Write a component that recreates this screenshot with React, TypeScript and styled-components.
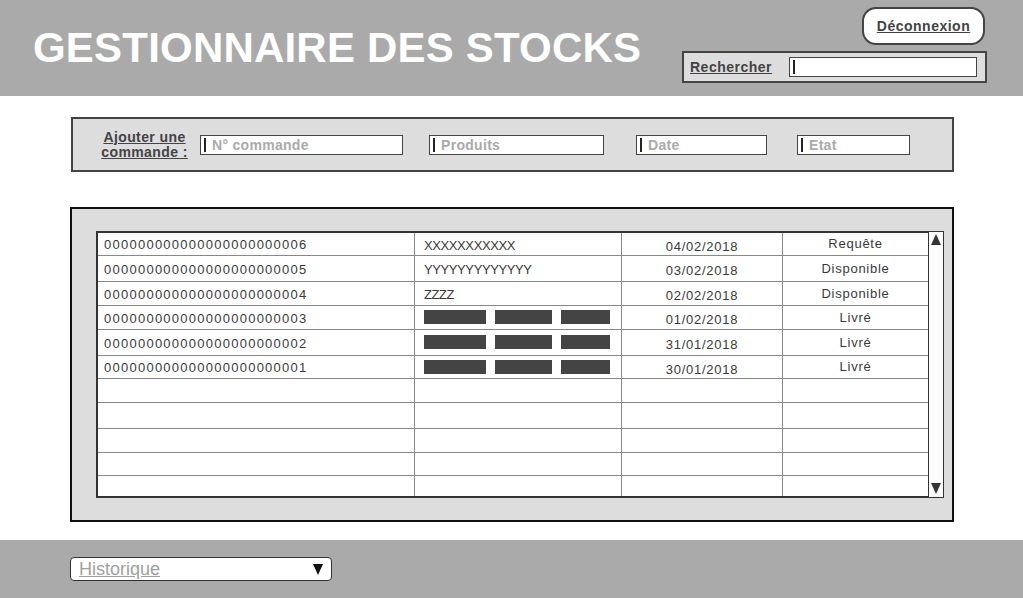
import React from "react";
import styled, { createGlobalStyle } from "styled-components";

const GlobalStyle = createGlobalStyle`
  html, body { margin: 0; padding: 0; }
  body { font-family: "Liberation Sans", Arial, sans-serif; background: #ffffff; }
  * { box-sizing: border-box; }
`;

const Page = styled.div`
  width: 1023px;
  height: 598px;
  display: flex;
  flex-direction: column;
  overflow: hidden;
`;

const Header = styled.header`
  height: 96px;
  background: #aaaaaa;
  display: flex;
  justify-content: space-between;
  align-items: center;
  padding: 0 36px 0 33px;
`;

const Title = styled.h1`
  margin: 0;
  font-family: "Liberation Sans", Arial, sans-serif;
  font-weight: 700;
  font-size: 42px;
  color: #ffffff;
  letter-spacing: 0.2px;
`;

const HeaderRight = styled.div`
  align-self: flex-start;
  padding-top: 7px;
  display: flex;
  flex-direction: column;
  align-items: flex-end;
  gap: 6px;
`;

const LogoutButton = styled.button`
  width: 123px;
  height: 38px;
  margin-right: 2px;
  border: 2px solid #444444;
  border-radius: 14px;
  background: #ffffff;
  font-family: "Liberation Sans", Arial, sans-serif;
  font-weight: 700;
  font-size: 14px;
  letter-spacing: 0.5px;
  color: #444444;
  text-decoration: underline;
  padding: 0;
  cursor: pointer;
`;

const SearchBox = styled.div`
  width: 305px;
  height: 32px;
  border: 2px solid #444444;
  background: #dddddd;
  display: flex;
  align-items: center;
  justify-content: space-between;
  padding: 0 8px 0 6px;
`;

const BoldLabel = styled.span`
  font-weight: 700;
  font-size: 14px;
  letter-spacing: 0.5px;
  color: #444444;
  text-decoration: underline;
  line-height: 15px;
  white-space: nowrap;
`;

const TextField = styled.div<{ $w: number; $ml?: number }>`
  width: ${(p) => p.$w}px;
  margin-left: ${(p) => p.$ml ?? 0}px;
  flex-shrink: 0;
  height: 20px;
  background: #ffffff;
  border: 1px solid #444444;
  display: flex;
  align-items: center;
  padding-left: 3px;
  gap: 6px;
`;

const Caret = styled.span`
  width: 2px;
  height: 14px;
  background: #222222;
  flex-shrink: 0;
`;

const Placeholder = styled.span`
  font-weight: 700;
  font-size: 14px;
  letter-spacing: 0.3px;
  color: #aaaaaa;
  white-space: nowrap;
`;

const Main = styled.main`
  flex: 1;
  background: #ffffff;
  padding: 21px 69px 0 70px;
  display: flex;
  flex-direction: column;
`;

const AddPanel = styled.section`
  margin-left: 1px;
  height: 55px;
  border: 2px solid #444444;
  background: #dddddd;
  display: flex;
  align-items: center;
  padding-left: 27px;
`;

const AddLabel = styled(BoldLabel)`
  width: 89px;
  text-align: center;
  letter-spacing: 0.4px;
  margin-right: 11px;
`;

const TablePanel = styled.section`
  margin-top: 35px;
  height: 315px;
  border: 2px solid #111111;
  background: #dddddd;
  padding: 22px 8px 22px 24px;
  display: flex;
`;

const TableBody = styled.div`
  flex: 1;
  background: #ffffff;
  border-top: 2px solid #333333;
  border-left: 2px solid #333333;
  border-bottom: 2px solid #333333;
  display: flex;
  flex-direction: column;
`;

const Row = styled.div<{ $h: number; $last?: boolean }>`
  height: ${(p) => p.$h}px;
  display: grid;
  grid-template-columns: 317px 207px 161px 1fr;
  border-bottom: ${(p) => (p.$last ? "none" : "1px solid #888888")};
`;

const Cell = styled.div<{
  $align?: "left" | "center";
  $pad?: number;
  $ls?: number;
  $dy?: number;
  $last?: boolean;
}>`
  border-right: ${(p) => (p.$last ? "none" : "1px solid #888888")};
  display: flex;
  align-items: center;
  justify-content: ${(p) => (p.$align === "center" ? "center" : "flex-start")};
  padding-left: ${(p) => p.$pad ?? 0}px;
  padding-top: ${(p) => Math.max(0, p.$dy ?? 0)}px;
  padding-bottom: ${(p) => Math.max(0, -(p.$dy ?? 0))}px;
  font-size: 13px;
  letter-spacing: ${(p) => p.$ls ?? 0}px;
  color: #3a3a3a;
  white-space: nowrap;
  overflow: hidden;
  gap: 9px;
`;

const Bar = styled.span<{ $w: number }>`
  width: ${(p) => p.$w}px;
  height: 14px;
  background: #444444;
  flex-shrink: 0;
`;

const ScrollBar = styled.div`
  width: 16px;
  background: #ffffff;
  border: 1px solid #333333;
  display: flex;
  flex-direction: column;
  justify-content: space-between;
  align-items: center;
  padding: 2px 0 3px;
`;

const Footer = styled.footer`
  height: 58px;
  background: #aaaaaa;
  display: flex;
  align-items: center;
  padding-left: 70px;
`;

const Select = styled.div`
  width: 262px;
  height: 24px;
  background: #ffffff;
  border: 1px solid #333333;
  border-radius: 4px;
  display: flex;
  align-items: center;
  justify-content: space-between;
  padding: 0 8px 0 8px;
`;

const SelectText = styled.span`
  font-size: 18px;
  color: #a0a0a0;
  text-decoration: underline;
`;

const Arrow = ({ up, dark }: { up?: boolean; dark?: boolean }) => (
  <svg width={10} height={11} viewBox="0 0 10 11">
    {up ? (
      <polygon points="5,0 10,11 0,11" fill="#333333" />
    ) : (
      <polygon points="0,0 10,0 5,11" fill={dark ? "#111111" : "#333333"} />
    )}
  </svg>
);

type Order = {
  id: string;
  product?: string;
  date: string;
  status: string;
};

const orders: Order[] = [
  { id: "000000000000000000000006", product: "XXXXXXXXXXX", date: "04/02/2018", status: "Requête" },
  { id: "000000000000000000000005", product: "YYYYYYYYYYYYY", date: "03/02/2018", status: "Disponible" },
  { id: "000000000000000000000004", product: "ZZZZ", date: "02/02/2018", status: "Disponible" },
  { id: "000000000000000000000003", date: "01/02/2018", status: "Livré" },
  { id: "000000000000000000000002", date: "31/01/2018", status: "Livré" },
  { id: "000000000000000000000001", date: "30/01/2018", status: "Livré" },
];

const rowHeights = [23, 26, 24, 24, 26, 24, 24, 26, 24, 23, 20];

export default function App() {
  return (
    <>
      <GlobalStyle />
      <Page>
        <Header>
          <Title>GESTIONNAIRE DES STOCKS</Title>
          <HeaderRight>
            <LogoutButton>Déconnexion</LogoutButton>
            <SearchBox>
              <BoldLabel>Rechercher</BoldLabel>
              <TextField $w={188}>
                <Caret />
              </TextField>
            </SearchBox>
          </HeaderRight>
        </Header>
        <Main>
          <AddPanel>
            <AddLabel>
              Ajouter une
              <br />
              commande :
            </AddLabel>
            <TextField $w={203}>
              <Caret />
              <Placeholder>N° commande</Placeholder>
            </TextField>
            <TextField $w={175} $ml={26}>
              <Caret />
              <Placeholder>Produits</Placeholder>
            </TextField>
            <TextField $w={131} $ml={32}>
              <Caret />
              <Placeholder>Date</Placeholder>
            </TextField>
            <TextField $w={113} $ml={30}>
              <Caret />
              <Placeholder>Etat</Placeholder>
            </TextField>
          </AddPanel>
          <TablePanel>
            <TableBody>
              {rowHeights.map((h, i) => {
                const o = orders[i];
                return (
                  <Row key={i} $h={h} $last={i === rowHeights.length - 1}>
                    <Cell $pad={6} $ls={1.25} $dy={2}>{o?.id}</Cell>
                    <Cell $pad={9} $ls={-0.4} $dy={o?.product ? 3 : 0}>
                      {o && o.product}
                      {o && !o.product && (
                        <>
                          <Bar $w={62} />
                          <Bar $w={57} />
                          <Bar $w={49} />
                        </>
                      )}
                    </Cell>
                    <Cell $align="center" $ls={0.75} $dy={5}>{o?.date}</Cell>
                    <Cell $align="center" $ls={0.75} $last>{o?.status}</Cell>
                  </Row>
                );
              })}
            </TableBody>
            <ScrollBar>
              <Arrow up />
              <Arrow />
            </ScrollBar>
          </TablePanel>
        </Main>
        <Footer>
          <Select>
            <SelectText>Historique</SelectText>
            <Arrow dark />
          </Select>
        </Footer>
      </Page>
    </>
  );
}
